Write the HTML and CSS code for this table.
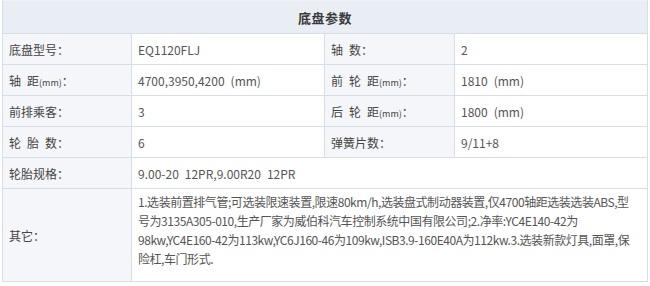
FILE: index.html
```html
<!DOCTYPE html>
<html lang="zh-CN">
<head>
<meta charset="utf-8">
<title>底盘参数</title>
<link rel="stylesheet" href="styles.css">
</head>
<body>
<table class="spec">
  <colgroup>
    <col class="c-lab">
    <col class="c-val">
    <col class="c-lab2">
    <col class="c-val2">
  </colgroup>
  <tr class="head-row">
    <th colspan="4" class="title">底盘参数</th>
  </tr>
  <tr>
    <td class="lab">底盘型号：</td>
    <td class="val">EQ1120FLJ</td>
    <td class="lab">轴&ensp;数：</td>
    <td class="val">2</td>
  </tr>
  <tr>
    <td class="lab">轴&ensp;距<span class="unit">(mm)</span>：</td>
    <td class="val">4700,3950,4200&ensp;(mm)</td>
    <td class="lab">前&ensp;轮&ensp;距<span class="unit">(mm)</span>：</td>
    <td class="val">1810&ensp;(mm)</td>
  </tr>
  <tr>
    <td class="lab">前排乘客：</td>
    <td class="val">3</td>
    <td class="lab">后&ensp;轮&ensp;距<span class="unit">(mm)</span>：</td>
    <td class="val">1800&ensp;(mm)</td>
  </tr>
  <tr>
    <td class="lab">轮&ensp;胎&ensp;数：</td>
    <td class="val">6</td>
    <td class="lab">弹簧片数：</td>
    <td class="val">9/11+8</td>
  </tr>
  <tr>
    <td class="lab">轮胎规格：</td>
    <td class="val" colspan="3">9.00-20&ensp;12PR,9.00R20&ensp;12PR</td>
  </tr>
  <tr class="other-row">
    <td class="lab">其它：</td>
    <td class="val other" colspan="3">1.选装前置排气管;可选装限速装置,限速80km/h,选装盘式制动器装置,仅4700轴距选装选装ABS,型<br>号为3135A305-010,生产厂家为威伯科汽车控制系统中国有限公司;2.净率:YC4E140-42为<br>98kw,YC4E160-42为113kw,YC6J160-46为109kw,ISB3.9-160E40A为112kw.3.选装新款灯具,面罩,保<br>险杠,车门形式.</td>
  </tr>
</table>
</body>
</html>
```

FILE: styles.css
```css
html, body {
  margin: 0;
  padding: 0;
  background: #ffffff;
}

body {
  padding: 0 2px;
  font-family: "Noto Sans CJK SC", "Noto Sans", sans-serif;
  font-size: 12px;
  color: #4a4a4a;
}

.spec {
  width: 645px;
  border-collapse: collapse;
  table-layout: fixed;
}

.c-lab { width: 129px; }
.c-val { width: 193px; }
.c-lab2 { width: 130px; }
.c-val2 { width: 193px; }

.spec th,
.spec td {
  border: 1px solid #d6dee7;
  padding: 0 6px;
  height: 31px;
  box-sizing: border-box;
  text-align: left;
  vertical-align: middle;
  white-space: nowrap;
}

.head-row .title {
  height: 33px;
  border-top-color: #eef2f6;
  background: #e9eef4;
  text-align: center;
  font-size: 13px;
  font-weight: bold;
  color: #3a3a3a;
  letter-spacing: 0.5px;
}

.lab {
  background: #f4f6f9;
  color: #444444;
}

.val {
  background: #ffffff;
  color: #555555;
}

.unit {
  font-size: 9px;
}

.other-row td {
  height: 93px;
}

.val.other {
  vertical-align: top;
  padding-top: 3px;
  line-height: 19px;
  letter-spacing: -0.45px;
  overflow: hidden;
}
```
